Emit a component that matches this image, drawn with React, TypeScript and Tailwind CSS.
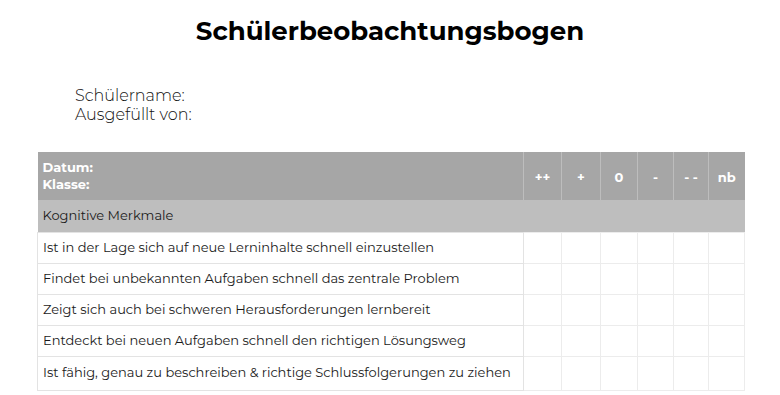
const ratings = ["++", "+", "0", "-", "- -", "nb"];

const items = [
  "Ist in der Lage sich auf neue Lerninhalte schnell einzustellen",
  "Findet bei unbekannten Aufgaben schnell das zentrale Problem",
  "Zeigt sich auch bei schweren Herausforderungen lernbereit",
  "Entdeckt bei neuen Aufgaben schnell den richtigen Lösungsweg",
  "Ist fähig, genau zu beschreiben & richtige Schlussfolgerungen zu ziehen",
];

const colWidths = ["w-[486px]", "w-[38px]", "w-[39px]", "w-[37px]", "w-[36px]", "w-[35px]", "w-[36px]"];

export default function App() {
  return (
    <div className="h-[395px] w-[780px] overflow-hidden bg-white font-['Montserrat','Open_Sans',sans-serif] text-[#111]">
      <h1 className="pt-[13px] text-center text-[26px] font-bold leading-[36px] text-black">
        Schülerbeobachtungsbogen
      </h1>

      <div className="mt-[37px] pl-[75px] text-[16px] font-light leading-[19px] text-[#111]">
        <div>Schülername:</div>
        <div>Ausgefüllt von:</div>
      </div>

      <table className="mt-[28px] ml-[37px] table-fixed border-collapse text-[13px]">
        <colgroup>
          {colWidths.map((w, i) => (
            <col key={i} className={w} />
          ))}
        </colgroup>
        <thead>
          <tr className="h-[48px] bg-[#a6a6a6] text-white">
            <th className="border-r border-[#bdbdbd] px-[5px] text-left align-middle text-[13px] font-bold leading-[17px]">
              <div>Datum:</div>
              <div>Klasse:</div>
            </th>
            {ratings.map((r) => (
              <th
                key={r}
                className="border-r border-[#bdbdbd] pt-[3px] text-center text-[13px] font-bold last:border-r-0"
              >
                {r}
              </th>
            ))}
          </tr>
        </thead>
        <tbody>
          <tr className="h-[32px] bg-[#bebebe]">
            <td colSpan={7} className="px-[5px] align-middle text-[#1a1a1a]">
              Kognitive Merkmale
            </td>
          </tr>
          {items.map((text, i) => (
            <tr key={text} className={i === 4 ? "h-[34px]" : "h-[31px]"}>
              <td className="border border-[#e3e3e3] px-[5px] align-middle text-[#1a1a1a]">{text}</td>
              {ratings.map((r) => (
                <td key={r} className="border border-[#ececec]" />
              ))}
            </tr>
          ))}
        </tbody>
      </table>
    </div>
  );
}
